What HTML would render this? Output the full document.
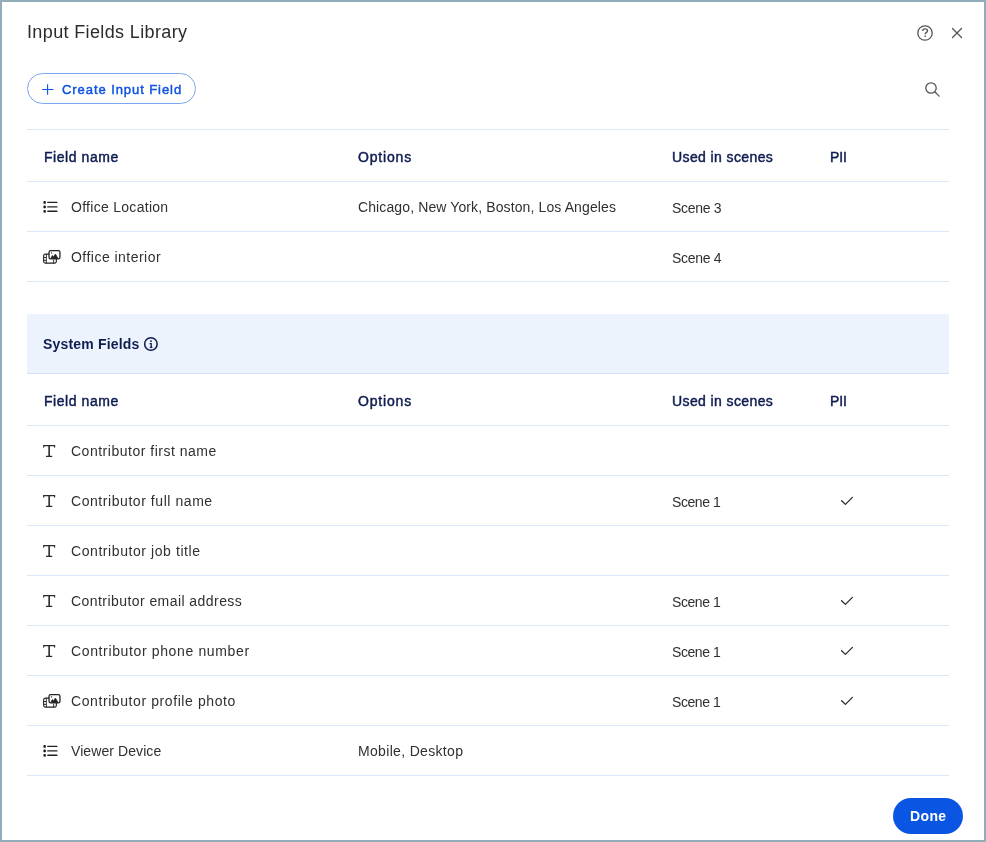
<!DOCTYPE html>
<html><head><meta charset="utf-8">
<style>
*{margin:0;padding:0;box-sizing:border-box}
html,body{width:986px;height:842px;overflow:hidden;background:#fff}
body{position:relative;font-family:"Liberation Sans",sans-serif;color:#2b2b2b}
.frame{position:absolute;left:0;top:0;width:986px;height:842px;border:2px solid #91adbc}
.t{position:absolute;white-space:nowrap;line-height:0;height:0;will-change:transform}
.h{font-weight:normal;-webkit-text-stroke:0.45px #0e1c50;color:#0e1c50;font-size:14px}
.b{font-size:14px;color:#303030}
.line{position:absolute;left:27px;width:922px;height:1px;background:#dce7fb}
.band{position:absolute;left:27px;width:922px;top:314px;height:59px;background:#edf3fd}
svg{position:absolute;overflow:visible}
</style></head><body>
<div class="frame"></div>

<svg style="left:0;top:0" width="986" height="120">
  <circle cx="925" cy="33" r="7.2" fill="none" stroke="#555" stroke-width="1.3"/>
  <path d="M952.5 28.5 L961.5 37.5 M961.5 28.5 L952.5 37.5" stroke="#555" stroke-width="1.3" stroke-linecap="round"/>
  <circle cx="931" cy="88" r="5.2" fill="none" stroke="#555" stroke-width="1.3"/>
  <path d="M935.2 92.2 L939.1 96.1" stroke="#555" stroke-width="1.3" stroke-linecap="round"/>
</svg>
<svg style="left:0;top:0" width="986" height="60"><path d="M922.7 30.9 C922.7 29.5 923.7 28.9 925.1 28.9 C926.6 28.9 927.5 29.7 927.5 30.9 C927.5 32.4 925.2 32.5 925.2 34.3" stroke="#555" stroke-width="1.4" fill="none"/><rect x="924.4" y="35.5" width="1.6" height="1.4" fill="#555"/></svg>

<div style="position:absolute;left:27px;top:73px;width:169px;height:31px;border:1px solid #7aa7f0;border-radius:16px"></div>
<svg style="left:0;top:0" width="100" height="120">
  <path d="M42.2 89.5 H53.3 M47.6 84.2 V94.8" stroke="#0f52e3" stroke-width="1.1"/>
</svg>

<div class="band"></div>
<div class="line" style="top:129px"></div>
<div class="line" style="top:181px"></div>
<div class="line" style="top:231px"></div>
<div class="line" style="top:281px"></div>
<div class="line" style="top:425px"></div>
<div class="line" style="top:475px"></div>
<div class="line" style="top:525px"></div>
<div class="line" style="top:575px"></div>
<div class="line" style="top:625px"></div>
<div class="line" style="top:675px"></div>
<div class="line" style="top:725px"></div>
<div class="line" style="top:775px"></div>

<div class="line" style="top:373px;background:#d2dffa"></div>

<div style="position:absolute;left:893px;top:798px;width:70px;height:36px;border-radius:18px;background:#0a55e2"></div>


<svg style="left:0;top:0" width="986" height="842">
  
  <g transform="translate(0,207)" fill="#222">
      <rect x="43.4" y="-5.9" width="2.5" height="2.7" rx="0.9"/>
      <rect x="43.4" y="-1.4" width="2.5" height="2.7" rx="0.9"/>
      <rect x="43.4" y="3.0" width="2.5" height="2.7" rx="0.9"/>
      <path d="M47.8 -4.6 H56.9 M47.8 -0.1 H56.9 M47.8 4.3 H56.9" stroke="#222" stroke-width="1.4" stroke-linecap="round" fill="none"/>
    </g>
  <g transform="translate(0,256)">
      <rect x="43.65" y="-1.85" width="12.7" height="9.0" rx="1.6" fill="none" stroke="#222" stroke-width="1.1"/>
      <path d="M46.35 -1.85 V7.1 M43.65 1.5 H46.35 M43.65 4.4 H46.35 M53.65 3.8 V7.1" stroke="#222" stroke-width="0.9" fill="none"/>
      <rect x="49.05" y="-5.35" width="10.9" height="8.2" rx="1.6" fill="#fff" stroke="#222" stroke-width="1.3"/>
      <path d="M50.8 2.4 L52.4 -0.6 L53.6 0.9 L55.4 -2.0 L58.0 2.4 Z" fill="#222" stroke="#222" stroke-width="0.7" stroke-linejoin="round"/>
      <circle cx="51.5" cy="-3.1" r="0.7" fill="#222"/>
    </g>
  <g transform="translate(0,451)">
      <path d="M43.7 -3.9 V-5.4 H54.6 V-3.9" stroke="#2b2b2b" stroke-width="1.2" fill="none" stroke-linecap="round"/>
      <path d="M49.15 -5.2 V5.6" stroke="#2b2b2b" stroke-width="1.6" fill="none"/>
      <path d="M46.6 5.4 H51.7" stroke="#2b2b2b" stroke-width="1.3" fill="none" stroke-linecap="round"/>
    </g>
  <g transform="translate(0,501)">
      <path d="M43.7 -3.9 V-5.4 H54.6 V-3.9" stroke="#2b2b2b" stroke-width="1.2" fill="none" stroke-linecap="round"/>
      <path d="M49.15 -5.2 V5.6" stroke="#2b2b2b" stroke-width="1.6" fill="none"/>
      <path d="M46.6 5.4 H51.7" stroke="#2b2b2b" stroke-width="1.3" fill="none" stroke-linecap="round"/>
    </g>
  <g transform="translate(0,551)">
      <path d="M43.7 -3.9 V-5.4 H54.6 V-3.9" stroke="#2b2b2b" stroke-width="1.2" fill="none" stroke-linecap="round"/>
      <path d="M49.15 -5.2 V5.6" stroke="#2b2b2b" stroke-width="1.6" fill="none"/>
      <path d="M46.6 5.4 H51.7" stroke="#2b2b2b" stroke-width="1.3" fill="none" stroke-linecap="round"/>
    </g>
  <g transform="translate(0,601)">
      <path d="M43.7 -3.9 V-5.4 H54.6 V-3.9" stroke="#2b2b2b" stroke-width="1.2" fill="none" stroke-linecap="round"/>
      <path d="M49.15 -5.2 V5.6" stroke="#2b2b2b" stroke-width="1.6" fill="none"/>
      <path d="M46.6 5.4 H51.7" stroke="#2b2b2b" stroke-width="1.3" fill="none" stroke-linecap="round"/>
    </g>
  <g transform="translate(0,651)">
      <path d="M43.7 -3.9 V-5.4 H54.6 V-3.9" stroke="#2b2b2b" stroke-width="1.2" fill="none" stroke-linecap="round"/>
      <path d="M49.15 -5.2 V5.6" stroke="#2b2b2b" stroke-width="1.6" fill="none"/>
      <path d="M46.6 5.4 H51.7" stroke="#2b2b2b" stroke-width="1.3" fill="none" stroke-linecap="round"/>
    </g>
  <g transform="translate(0,700)">
      <rect x="43.65" y="-1.85" width="12.7" height="9.0" rx="1.6" fill="none" stroke="#222" stroke-width="1.1"/>
      <path d="M46.35 -1.85 V7.1 M43.65 1.5 H46.35 M43.65 4.4 H46.35 M53.65 3.8 V7.1" stroke="#222" stroke-width="0.9" fill="none"/>
      <rect x="49.05" y="-5.35" width="10.9" height="8.2" rx="1.6" fill="#fff" stroke="#222" stroke-width="1.3"/>
      <path d="M50.8 2.4 L52.4 -0.6 L53.6 0.9 L55.4 -2.0 L58.0 2.4 Z" fill="#222" stroke="#222" stroke-width="0.7" stroke-linejoin="round"/>
      <circle cx="51.5" cy="-3.1" r="0.7" fill="#222"/>
    </g>
  <g transform="translate(0,751)" fill="#222">
      <rect x="43.4" y="-5.9" width="2.5" height="2.7" rx="0.9"/>
      <rect x="43.4" y="-1.4" width="2.5" height="2.7" rx="0.9"/>
      <rect x="43.4" y="3.0" width="2.5" height="2.7" rx="0.9"/>
      <path d="M47.8 -4.6 H56.9 M47.8 -0.1 H56.9 M47.8 4.3 H56.9" stroke="#222" stroke-width="1.4" stroke-linecap="round" fill="none"/>
    </g>
  <g transform="translate(0,501)"><path d="M841.6 -0.3 L845.4 3.4 L852.4 -3.6" stroke="#2b2b2b" stroke-width="1.3" fill="none" stroke-linecap="round" stroke-linejoin="round"/></g>
  <g transform="translate(0,601)"><path d="M841.6 -0.3 L845.4 3.4 L852.4 -3.6" stroke="#2b2b2b" stroke-width="1.3" fill="none" stroke-linecap="round" stroke-linejoin="round"/></g>
  <g transform="translate(0,651)"><path d="M841.6 -0.3 L845.4 3.4 L852.4 -3.6" stroke="#2b2b2b" stroke-width="1.3" fill="none" stroke-linecap="round" stroke-linejoin="round"/></g>
  <g transform="translate(0,701)"><path d="M841.6 -0.3 L845.4 3.4 L852.4 -3.6" stroke="#2b2b2b" stroke-width="1.3" fill="none" stroke-linecap="round" stroke-linejoin="round"/></g>
  <circle cx="150.9" cy="344" r="6.25" fill="none" stroke="#0e1c50" stroke-width="1.5"/>
  <circle cx="151" cy="341.2" r="0.9" fill="#0e1c50"/>
  <path d="M149.6 343.6 H151.2 V347.4 M149.8 347.4 H152.4" stroke="#0e1c50" stroke-width="1.3" fill="none"/>
</svg>

<div class="t " id="title" style="left:27px;top:32px;letter-spacing:0.368px;font-size:18px;color:#2b2b2b">Input Fields Library</div>
<div class="t " id="create" style="left:62px;top:89.5px;letter-spacing:0.929px;font-size:13px;font-weight:normal;-webkit-text-stroke:0.45px #0f52e3;color:#0f52e3">Create Input Field</div>
<div class="t h" id="h1fn" style="left:44px;top:157px;letter-spacing:0.556px;">Field name</div>
<div class="t h" id="h1op" style="left:358px;top:157px;letter-spacing:0.817px;">Options</div>
<div class="t h" id="h1us" style="left:672px;top:157px;letter-spacing:0.392px;">Used in scenes</div>
<div class="t h" id="h1pii" style="left:830px;top:157px;letter-spacing:-0.150px;">PII</div>
<div class="t h" id="h2fn" style="left:44px;top:401px;letter-spacing:0.556px;">Field name</div>
<div class="t h" id="h2op" style="left:358px;top:401px;letter-spacing:0.817px;">Options</div>
<div class="t h" id="h2us" style="left:672px;top:401px;letter-spacing:0.392px;">Used in scenes</div>
<div class="t h" id="h2pii" style="left:830px;top:401px;letter-spacing:-0.150px;">PII</div>
<div class="t b" id="r1" style="left:71px;top:207px;letter-spacing:0.286px;">Office Location</div>
<div class="t b" id="r1o" style="left:358px;top:207px;letter-spacing:0.114px;">Chicago, New York, Boston, Los Angeles</div>
<div class="t b" id="r1s" style="left:672px;top:208px;letter-spacing:-0.300px;">Scene 3</div>
<div class="t b" id="r2" style="left:71px;top:257px;letter-spacing:0.471px;">Office interior</div>
<div class="t b" id="r2s" style="left:672px;top:258px;letter-spacing:-0.300px;">Scene 4</div>
<div class="t h" id="sys" style="left:43px;top:344px;letter-spacing:0.175px;font-weight:bold;-webkit-text-stroke:0">System Fields</div>
<div class="t b" id="s0" style="left:71px;top:451px;letter-spacing:0.510px;">Contributor first name</div>
<div class="t b" id="s1" style="left:71px;top:501px;letter-spacing:0.560px;">Contributor full name</div>
<div class="t b" id="s1s" style="left:672px;top:502px;letter-spacing:-0.433px;">Scene 1</div>
<div class="t b" id="s2" style="left:71px;top:551px;letter-spacing:0.575px;">Contributor job title</div>
<div class="t b" id="s3" style="left:71px;top:601px;letter-spacing:0.438px;">Contributor email address</div>
<div class="t b" id="s3s" style="left:672px;top:602px;letter-spacing:-0.433px;">Scene 1</div>
<div class="t b" id="s4" style="left:71px;top:651px;letter-spacing:0.635px;">Contributor phone number</div>
<div class="t b" id="s4s" style="left:672px;top:652px;letter-spacing:-0.433px;">Scene 1</div>
<div class="t b" id="s5" style="left:71px;top:701px;letter-spacing:0.588px;">Contributor profile photo</div>
<div class="t b" id="s5s" style="left:672px;top:702px;letter-spacing:-0.433px;">Scene 1</div>
<div class="t b" id="s6" style="left:71px;top:751px;letter-spacing:0.083px;">Viewer Device</div>
<div class="t b" id="s6o" style="left:358px;top:751px;letter-spacing:0.329px;">Mobile, Desktop</div>
<div class="t " id="done" style="left:910px;top:816px;letter-spacing:0.367px;font-size:14px;font-weight:bold;color:#fff">Done</div>
</body></html>
